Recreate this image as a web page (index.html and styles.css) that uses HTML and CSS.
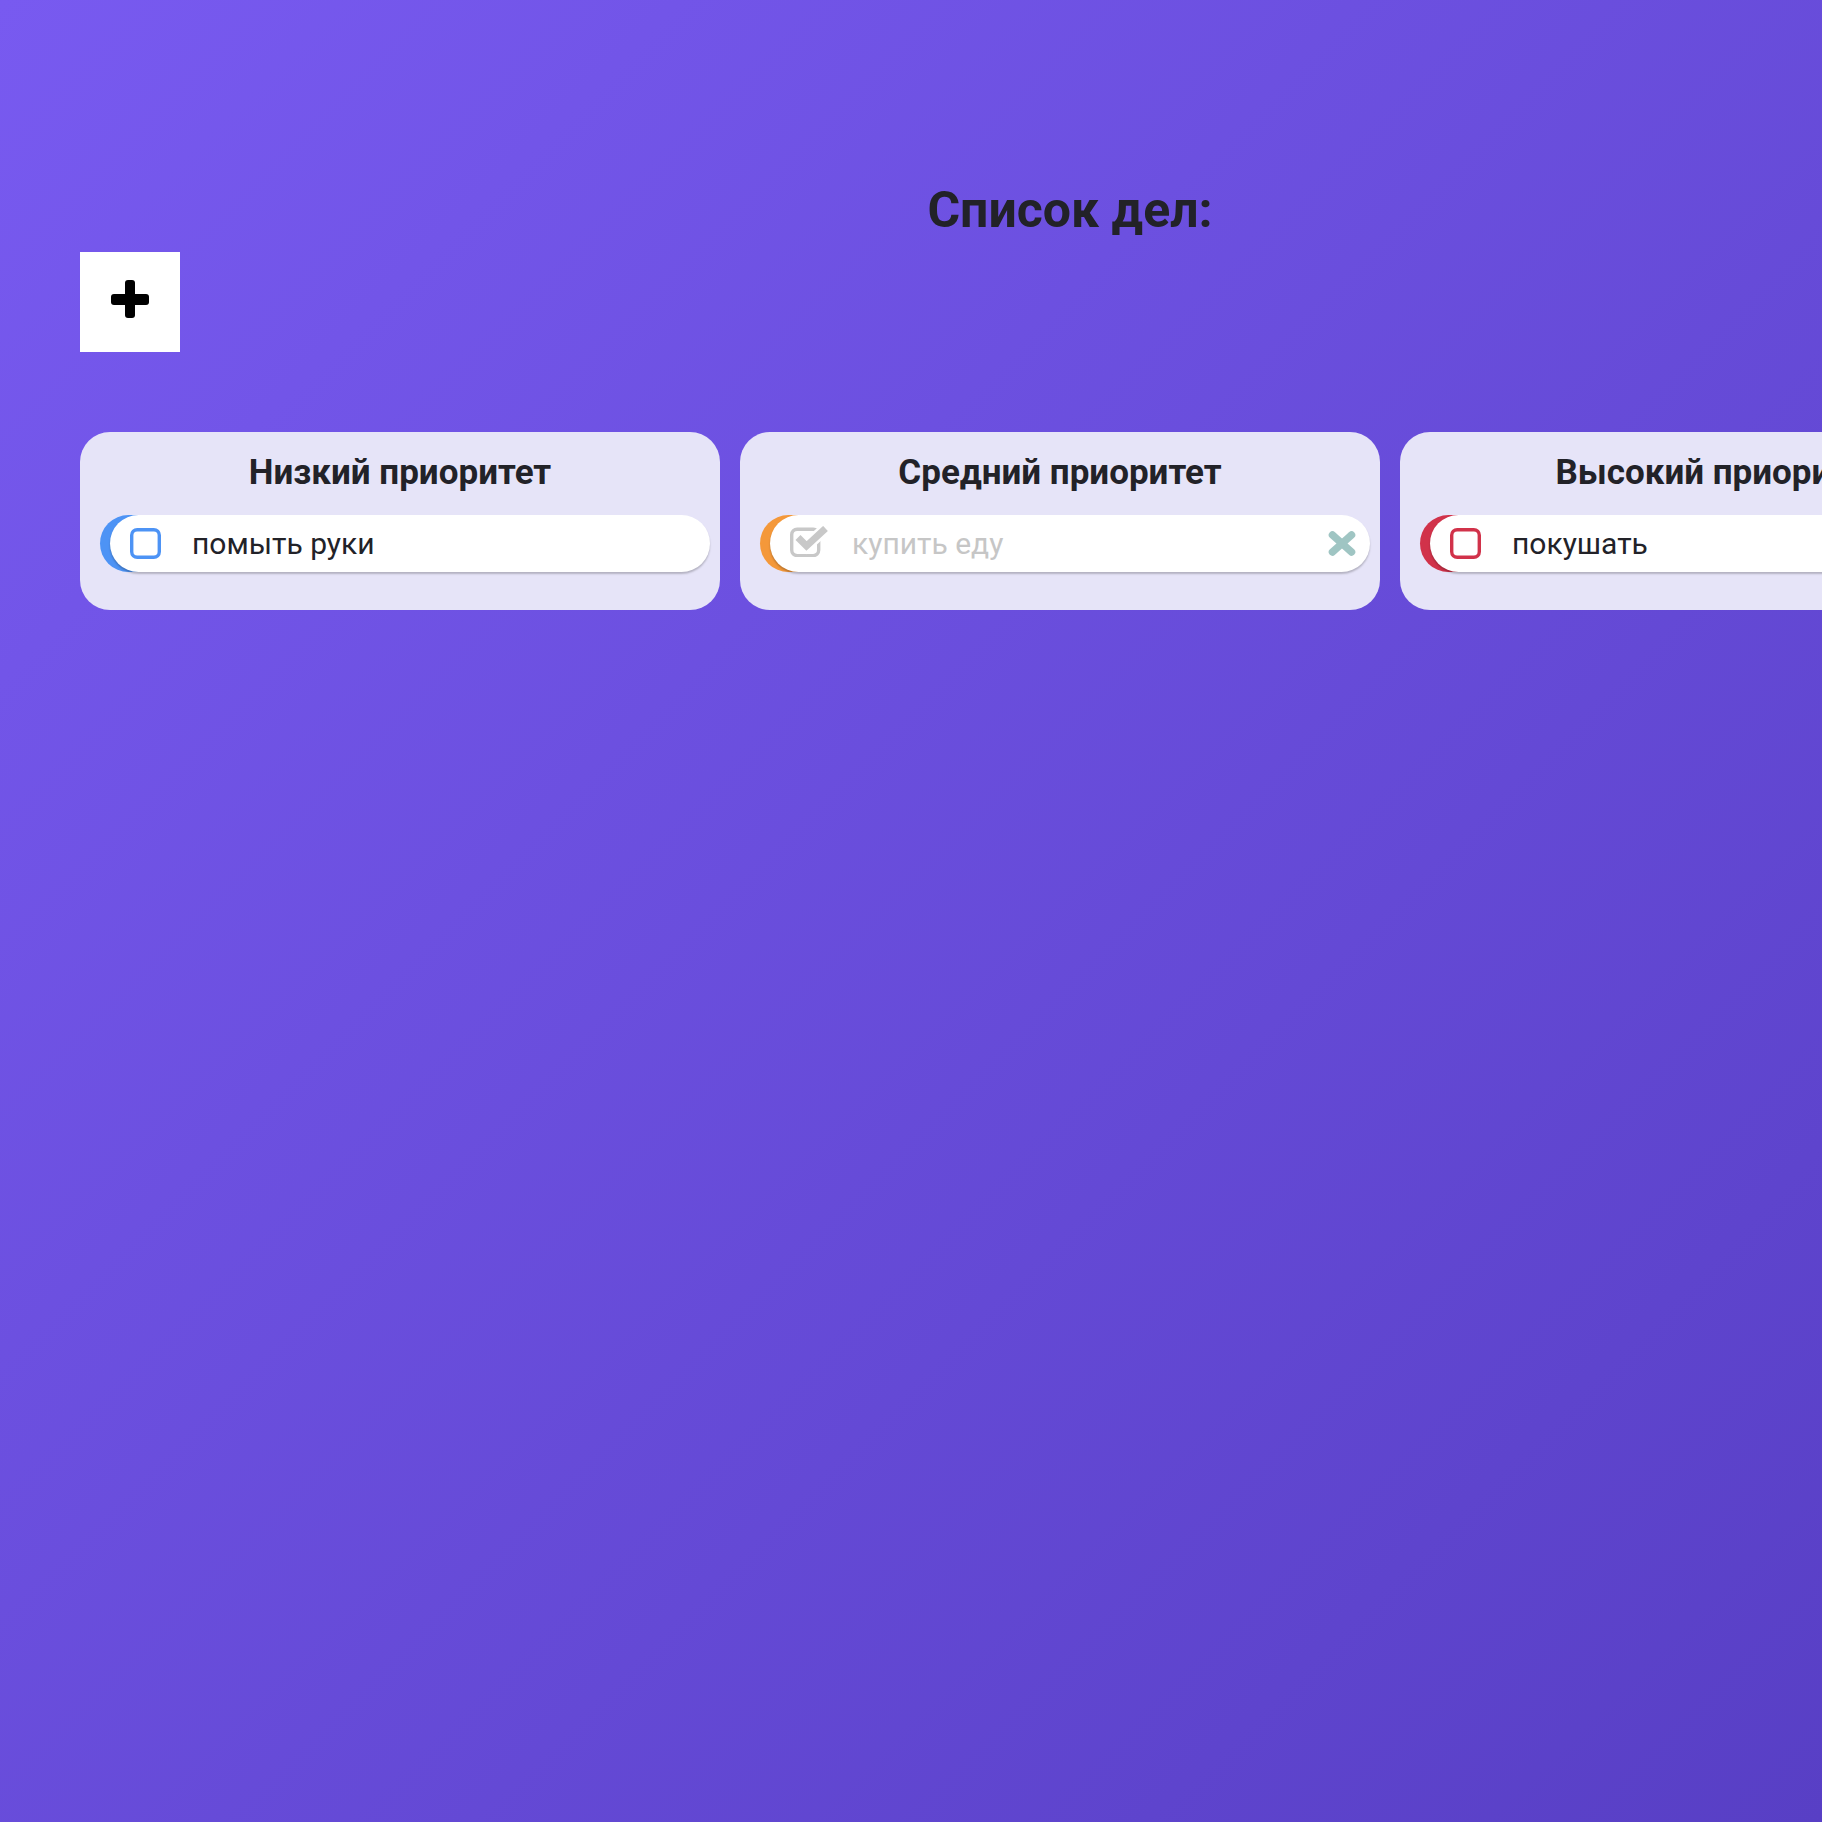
FILE: index.html
```html
<!DOCTYPE html>
<html lang="ru">
<head>
<meta charset="utf-8">
<title>Список дел</title>
<link rel="stylesheet" href="styles.css">
</head>
<body>
<div class="app">
  <div class="board">
    <h1 class="title">Список дел:</h1>
    <button class="add-btn" type="button" aria-label="Добавить">
      <svg width="38" height="38" viewBox="0 0 38 38"><rect x="0" y="14" width="38" height="11" rx="3"/><rect x="14" y="0" width="10" height="38" rx="3"/></svg>
    </button>
    <div class="columns">
      <section class="column">
        <h2 class="column-title">Низкий приоритет</h2>
        <div class="item item-low">
          <svg class="box" width="31" height="31" viewBox="0 0 31 31"><rect x="1.7" y="1.7" width="27.6" height="27.6" rx="5.5" fill="none" stroke="currentColor" stroke-width="3.4"/></svg>
          <span class="item-text">помыть руки</span>
        </div>
      </section>
      <section class="column">
        <h2 class="column-title">Средний приоритет</h2>
        <div class="item item-mid done">
          <svg class="box box-checked" width="38" height="31" viewBox="0 0 38 31"><rect x="1.7" y="3.2" width="27" height="26.4" rx="5.5" fill="none" stroke="#c8c8c8" stroke-width="3.4"/><polyline points="8,11.5 16.5,20 35.5,2.5" fill="none" stroke="#ffffff" stroke-width="12" stroke-linejoin="miter"/><polyline points="8,11.5 16.5,20 35.5,2.5" fill="none" stroke="#c8c8c8" stroke-width="7" stroke-linejoin="miter"/></svg>
          <span class="item-text">купить еду</span>
          <svg class="remove" width="28" height="25" viewBox="0 0 28 25"><line x1="4.5" y1="4" x2="23.5" y2="21" stroke="#9fc5c3" stroke-width="7.5" stroke-linecap="round"/><line x1="23.5" y1="4" x2="4.5" y2="21" stroke="#9fc5c3" stroke-width="7.5" stroke-linecap="round"/></svg>
        </div>
      </section>
      <section class="column">
        <h2 class="column-title">Высокий приоритет</h2>
        <div class="item item-high">
          <svg class="box" width="31" height="31" viewBox="0 0 31 31"><rect x="1.7" y="1.7" width="27.6" height="27.6" rx="5.5" fill="none" stroke="currentColor" stroke-width="3.4"/></svg>
          <span class="item-text">покушать</span>
        </div>
      </section>
    </div>
  </div>
</div>
</body>
</html>
```

FILE: styles.css
```css
html, body {
  margin: 0;
  padding: 0;
}

body {
  min-height: 100vh;
  overflow: hidden;
  background: linear-gradient(135deg, #785af0 0%, #583fc5 100%);
  font-family: Roboto, "Noto Sans", "Liberation Sans", sans-serif;
  color: #212529;
}

.app {
  padding: 181px 0 0 80px;
}

.board {
  width: max-content;
}

.title {
  margin: 0;
  font-size: 50px;
  font-weight: 700;
  line-height: normal;
  text-align: center;
  color: #222228;
}

.add-btn {
  display: flex;
  align-items: center;
  justify-content: center;
  width: 100px;
  height: 100px;
  margin-top: 13px;
  padding: 0 0 6px 0;
  border: none;
  background: #ffffff;
  cursor: pointer;
}

.add-btn svg {
  fill: #000000;
}

.columns {
  display: flex;
  margin-top: 80px;
}

.column {
  width: 640px;
  flex: 0 0 640px;
  box-sizing: border-box;
  margin-right: 20px;
  padding: 20px 0 38px 0;
  border-radius: 30px;
  background: #e6e4f8;
}

.column-title {
  margin: 0;
  font-size: 35px;
  font-weight: 700;
  line-height: normal;
  text-align: center;
  color: #222228;
}

.item {
  display: flex;
  align-items: center;
  height: 57px;
  margin: 21.5px 10px 0 30px;
  padding: 0 14px 0 20px;
  border-radius: 28.5px;
  background: #ffffff;
}

.item-low {
  color: #4d93f5;
  box-shadow: 0 2px 2px rgba(0, 0, 0, 0.22), -10px 0 0 0 #4d93f5;
}

.item-mid {
  box-shadow: 0 2px 2px rgba(0, 0, 0, 0.22), -10px 0 0 0 #f4983a;
}

.item-high {
  color: #d1324a;
  box-shadow: 0 2px 2px rgba(0, 0, 0, 0.22), -10px 0 0 0 #d1324a;
}

.box {
  flex: 0 0 auto;
  display: block;
}

.box-checked {
  margin-top: -3px;
}

.item-text {
  margin-left: 31px;
  font-size: 30px;
  line-height: normal;
  color: #222228;
}

.item-mid .item-text {
  margin-left: 24px;
}

.done .item-text {
  color: #c6c6c6;
}

.remove {
  display: block;
  margin-left: auto;
  flex: 0 0 auto;
}
```
